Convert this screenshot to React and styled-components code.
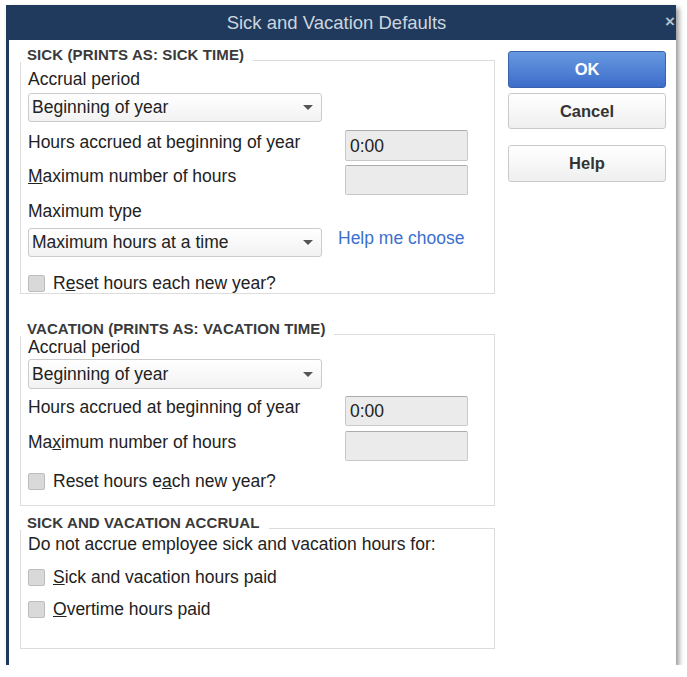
import React from 'react';
import styled, { createGlobalStyle } from 'styled-components';

const GlobalStyle = createGlobalStyle`
  html, body {
    margin: 0;
    padding: 0;
    background: #ffffff;
    font-family: 'Liberation Sans', Arial, sans-serif;
  }
`;

const Page = styled.div`
  padding: 5px 0 0 6px;
`;

const Dialog = styled.div`
  width: 667px;
  height: 660px;
  background: #ffffff;
  border-left: 3px solid #1f3a5c;
  box-shadow: 3px 3px 5px rgba(0, 0, 0, 0.4);
  display: flex;
  flex-direction: column;
`;

const TitleBar = styled.div`
  position: relative;
  height: 35px;
  background: #1f3a5c;
  color: #cdd5de;
  font-size: 18.5px;
  display: flex;
  align-items: center;
  justify-content: center;
  padding-right: 12px;
`;

const Close = styled.span`
  position: absolute;
  right: 1px;
  top: 7px;
  font-size: 17px;
  font-weight: bold;
  color: #b8bec6;
`;

const Body = styled.div`
  display: flex;
  padding: 8px 10px 0 11px;
  gap: 13px;
`;

const LeftCol = styled.div`
  width: 475px;
  display: flex;
  flex-direction: column;
`;

const RightCol = styled.div`
  width: 158px;
  display: flex;
  flex-direction: column;
  padding-top: 3px;
`;

const Button = styled.button`
  height: ${p => p.$h || 37}px;
  margin-top: ${p => p.$mt || 0}px;
  border-radius: 3px;
  font-family: 'Liberation Sans', Arial, sans-serif;
  font-size: 16.5px;
  font-weight: bold;
  padding: 0;
  border: 1px solid ${p => (p.$primary ? '#3a62ab' : '#cacaca')};
  background: ${p =>
    p.$primary
      ? 'linear-gradient(#6699e0, #3d6dcb)'
      : 'linear-gradient(#ffffff, #efefef)'};
  color: ${p => (p.$primary ? '#ffffff' : '#333333')};
`;

const Group = styled.div`
  margin-top: ${p => p.$mt || 0}px;
  display: flex;
  flex-direction: column;
`;

const Legend = styled.div`
  align-self: flex-start;
  position: relative;
  z-index: 1;
  background: #ffffff;
  padding: 0 9px 0 7px;
  margin-bottom: -2px;
  font-size: 15px;
  line-height: 14px;
  font-weight: bold;
  color: #3a3a3a;
  letter-spacing: 0.1px;
`;

const Box = styled.div`
  border: 1px solid #dcdcdc;
  padding: 0 0 ${p => p.$pb || 0}px 7px;
  display: flex;
  flex-direction: column;
`;

const Label = styled.div`
  font-size: 17.5px;
  line-height: 18px;
  color: #222222;
  margin-top: ${p => p.$mt || 0}px;
  padding-top: ${p => p.$pt || 0}px;
  white-space: nowrap;
`;

const Select = styled.div`
  width: 294px;
  height: ${p => p.$h || 29}px;
  margin-top: ${p => p.$mt || 0}px;
  box-sizing: border-box;
  border: 1px solid #cbcbcb;
  border-radius: 3px;
  background: linear-gradient(#ffffff, #f2f2f2);
  display: flex;
  align-items: center;
  justify-content: space-between;
  padding: 0 8px 0 3px;
  font-size: 17.5px;
  color: #222222;
`;

const Arrow = styled.span`
  width: 0;
  height: 0;
  border-left: 5px solid transparent;
  border-right: 5px solid transparent;
  border-top: 5px solid #555555;
`;

const FieldRow = styled.div`
  display: flex;
  align-items: flex-start;
  margin-top: ${p => p.$mt || 0}px;
`;

const Input = styled.div`
  margin-left: auto;
  margin-right: 26px;
  width: 123px;
  height: ${p => p.$h || 30}px;
  box-sizing: border-box;
  background: #ebebeb;
  border: 1px solid #c8c8c8;
  border-top-color: #acacac;
  border-radius: 2px;
  display: flex;
  align-items: center;
  padding-left: 4px;
  padding-top: 1px;
  font-size: 17.5px;
  color: #222222;
`;

const TypeRow = styled.div`
  display: flex;
  align-items: center;
  margin-top: 8px;
  gap: 16px;
`;

const Link = styled.span`
  font-size: 17.5px;
  color: #3b6fcf;
  margin-top: -9px;
`;

const CheckRow = styled.div`
  display: flex;
  align-items: center;
  gap: 8px;
  margin-top: ${p => p.$mt || 0}px;
`;

const Check = styled.span`
  width: 15px;
  height: 15px;
  border: 1px solid #bdbdbd;
  border-radius: 2px;
  background: #d9d9d9;
  flex-shrink: 0;
`;

const U = styled.span`
  text-decoration: underline;
`;

export default function App() {
  return (
    <Page>
      <GlobalStyle />
      <Dialog>
        <TitleBar>
          Sick and Vacation Defaults
          <Close>×</Close>
        </TitleBar>
        <Body>
          <LeftCol>
            <Group>
              <Legend>SICK (PRINTS AS: SICK TIME)</Legend>
              <Box $pb={1}>
                <Label $mt={9}>Accrual period</Label>
                <Select $mt={5}>
                  Beginning of year
                  <Arrow />
                </Select>
                <FieldRow $mt={8}>
                  <Label $pt={3}>Hours accrued at beginning of year</Label>
                  <Input $h={31}>0:00</Input>
                </FieldRow>
                <FieldRow $mt={4}>
                  <Label $pt={2}>
                    <U>M</U>aximum number of hours
                  </Label>
                  <Input />
                </FieldRow>
                <Label $mt={7}>Maximum type</Label>
                <TypeRow>
                  <Select>
                    Maximum hours at a time
                    <Arrow />
                  </Select>
                  <Link>Help me choose</Link>
                </TypeRow>
                <CheckRow $mt={17}>
                  <Check />
                  <Label>
                    R<U>e</U>set hours each new year?
                  </Label>
                </CheckRow>
              </Box>
            </Group>

            <Group $mt={28}>
              <Legend>VACATION (PRINTS AS: VACATION TIME)</Legend>
              <Box $pb={15}>
                <Label $mt={3}>Accrual period</Label>
                <Select $mt={3} $h={30}>
                  Beginning of year
                  <Arrow />
                </Select>
                <FieldRow $mt={7}>
                  <Label $pt={2}>Hours accrued at beginning of year</Label>
                  <Input>0:00</Input>
                </FieldRow>
                <FieldRow $mt={5}>
                  <Label $pt={2}>
                    Ma<U>x</U>imum number of hours
                  </Label>
                  <Input />
                </FieldRow>
                <CheckRow $mt={11}>
                  <Check />
                  <Label>
                    Reset hours e<U>a</U>ch new year?
                  </Label>
                </CheckRow>
              </Box>
            </Group>

            <Group $mt={10}>
              <Legend>SICK AND VACATION ACCRUAL</Legend>
              <Box $pb={30}>
                <Label $mt={6}>Do not accrue employee sick and vacation hours for:</Label>
                <CheckRow $mt={15}>
                  <Check />
                  <Label>
                    <U>S</U>ick and vacation hours paid
                  </Label>
                </CheckRow>
                <CheckRow $mt={14}>
                  <Check />
                  <Label>
                    <U>O</U>vertime hours paid
                  </Label>
                </CheckRow>
              </Box>
            </Group>
          </LeftCol>
          <RightCol>
            <Button $primary>OK</Button>
            <Button $mt={5} $h={36}>Cancel</Button>
            <Button $mt={16}>Help</Button>
          </RightCol>
        </Body>
      </Dialog>
    </Page>
  );
}
